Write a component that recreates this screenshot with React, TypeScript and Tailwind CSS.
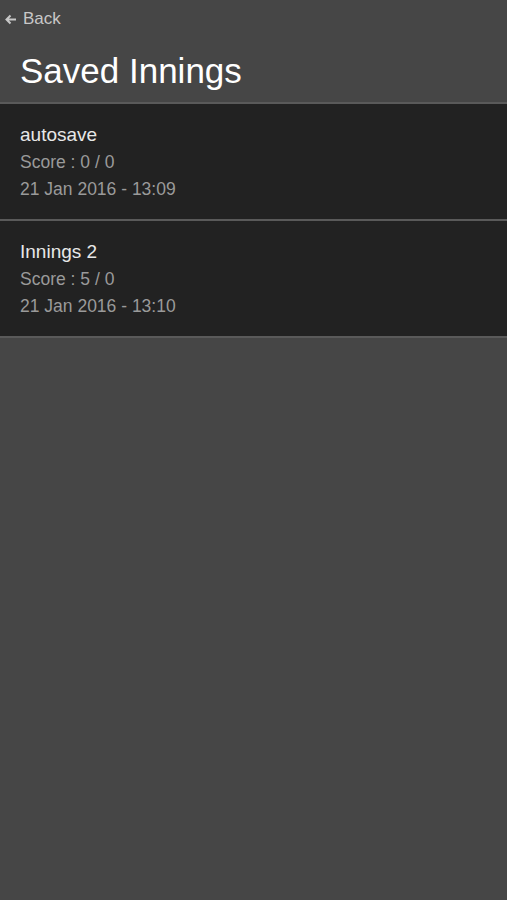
import React from "react";

const innings = [
	{ name: "autosave", score: "0 / 0", date: "21 Jan 2016 - 13:09" },
	{ name: "Innings 2", score: "5 / 0", date: "21 Jan 2016 - 13:10" },
];

export default function App() {
	return (
		<div className="min-h-[900px] bg-[#464646] font-['Liberation_Sans',Arial,sans-serif]">
			<header className="h-[104px] border-b-2 border-[#5a5a5a]">
				<div className="flex items-center h-[38px] pl-[5px] text-[17px] text-[#c8c8c8]">
					<svg width="12" height="11" viewBox="0 0 12 11" className="mr-[6px]" fill="none">
						<path d="M11 5.5H2M5.5 1.5L1.5 5.5L5.5 9.5" stroke="#c8c8c8" strokeWidth="2" />
					</svg>
					Back
				</div>
				<h1 className="pl-[20px] pt-[15px] text-[35px] leading-none text-white">
					Saved Innings
				</h1>
			</header>
			<ul>
				{innings.map((item) => (
					<li
						key={item.name}
						className="h-[117px] bg-[#222222] border-b-2 border-[#5a5a5a] pl-[20px] pt-[18px]"
					>
						<div className="text-[19px] leading-[26px] text-[#e8e8e8]">{item.name}</div>
						<div className="mt-[1px] text-[17.5px] leading-[26px] text-[#9a9a9a]">
							Score : {item.score}
						</div>
						<div className="mt-[1px] text-[17.5px] leading-[26px] text-[#9a9a9a]">
							{item.date}
						</div>
					</li>
				))}
			</ul>
		</div>
	);
}
